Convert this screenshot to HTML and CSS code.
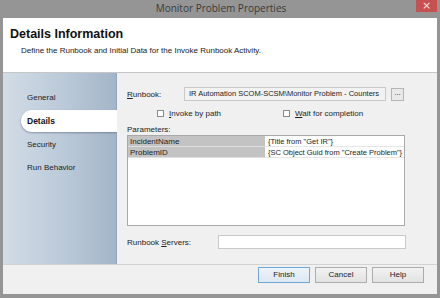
FILE: index.html
```html
<!DOCTYPE html>
<html>
<head>
<meta charset="utf-8">
<link rel="stylesheet" href="styles.css">
</head>
<body>
<div class="window">
  <div class="titlebar">
    <span class="title">Monitor Problem Properties</span>
    <div class="close">×</div>
  </div>
  <div class="dialog">
    <div class="header">
      <div class="h-title">Details Information</div>
      <div class="h-sub">Define the Runbook and Initial Data for the Invoke Runbook Activity.</div>
    </div>
    <div class="main">
      <div class="sidebar">
        <div class="nav">General</div>
        <div class="nav active">Details</div>
        <div class="nav">Security</div>
        <div class="nav">Run Behavior</div>
      </div>
      <div class="content">
        <div class="row-runbook">
          <span class="lbl lbl-runbook"><u>R</u>unbook:</span>
          <div class="textbox tb-runbook">IR Automation SCOM-SCSM\Monitor Problem - Counters</div>
          <div class="btn-dots">...</div>
        </div>
        <div class="row-checks">
          <label class="chk chk1"><span class="box"></span><span><u>I</u>nvoke by path</span></label>
          <label class="chk chk2"><span class="box"></span><span><u>W</u>ait for completion</span></label>
        </div>
        <div class="lbl lbl-params">Parameters:</div>
        <div class="grid">
          <div class="cell name">IncidentName</div>
          <div class="cell val">{Title from "Get IR"}</div>
          <div class="cell name">ProblemID</div>
          <div class="cell val">{SC Object Guid from "Create Problem"}</div>
        </div>
        <div class="row-servers">
          <span class="lbl lbl-servers">Runbook <u>S</u>ervers:</span>
          <div class="textbox tb-servers"></div>
        </div>
      </div>
    </div>
    <div class="footer">
      <div class="button default">Finish</div>
      <div class="button">Cancel</div>
      <div class="button">Help</div>
    </div>
  </div>
</div>
</body>
</html>
```
FILE: styles.css
```css
* { box-sizing: border-box; }
html, body { margin: 0; padding: 0; }
body {
  width: 440px;
  height: 298px;
  background: #8f8f8f;
  font-family: "Liberation Sans", Arial, sans-serif;
  color: #1e1e1e;
  font-size: 8px;
  overflow: hidden;
}
.window {
  width: 440px;
  height: 298px;
  display: flex;
  flex-direction: column;
  background: #959595;
}
.titlebar {
  height: 18px;
  position: relative;
  display: flex;
  align-items: center;
  justify-content: center;
}
.title {
  font-family: "Open Sans", "Liberation Sans", sans-serif;
  font-size: 10px;
  color: #3a3a3a;
  margin-top: -3px;
  margin-left: 2px;
}
.close {
  position: absolute;
  top: 0;
  right: 3px;
  width: 21px;
  height: 12px;
  background: #c75050;
  color: #f4e0e0;
  font-size: 11px;
  line-height: 11px;
  text-align: center;
  font-family: "DejaVu Sans", sans-serif;
}
.dialog {
  flex: 1;
  margin: 0 3px 4px 3px;
  background: #fff;
  display: flex;
  flex-direction: column;
}
.header {
  height: 55px;
  border-bottom: 1px solid #c6c6c6;
  padding: 8px 0 0 7px;
}
.h-title {
  font-size: 12.5px;
  font-weight: bold;
  color: #111;
  line-height: 16px;
}
.h-sub {
  margin: 2px 0 0 11px;
  font-size: 8px;
  line-height: 14px;
  color: #222;
}
.main {
  height: 191px;
  display: flex;
}
.sidebar {
  width: 114px;
  background: linear-gradient(to right, #d2dce6 0%, #bac9d8 55%, #a3b5c9 100%);
  border-right: 1px solid #94a6ba;
  padding-top: 13px;
}
.nav {
  height: 23px;
  line-height: 23px;
  padding-left: 24px;
  font-size: 8px;
  color: #222;
}
.nav.active {
  height: 22px;
  line-height: 22px;
  margin: 1px -1px 1px 18px;
  padding-left: 6px;
  background: #fff;
  border-radius: 11px 0 0 11px;
  font-weight: bold;
  font-size: 8.5px;
  color: #111;
  box-shadow: 0 1px 2px rgba(60, 70, 90, 0.45);
}
.content {
  flex: 1;
  background: #f0f0f0;
  padding: 14px 0 0 10px;
  display: flex;
  flex-direction: column;
}
.row-runbook {
  display: flex;
  align-items: center;
  height: 14px;
}
.lbl { font-size: 8px; color: #222; }
.lbl-runbook { width: 57px; }
.textbox {
  height: 14px;
  border: 1px solid #c9c9c9;
  background: #fafafa;
  font-size: 8px;
  line-height: 12px;
  padding-left: 4px;
  white-space: nowrap;
  overflow: hidden;
}
.tb-runbook { width: 202px; background: #f2f2f2; font-size: 7.5px; padding-left: 4px; }
.btn-dots {
  margin-left: 5px;
  width: 13px;
  height: 13px;
  border: 1px solid #b5b5b5;
  background: #e9e9e9;
  font-size: 8px;
  line-height: 7px;
  text-align: center;
  color: #333;
}
.row-checks {
  display: flex;
  height: 14px;
  margin-top: 5px;
  align-items: center;
}
.chk { display: flex; align-items: center; font-size: 8px; }
.chk .box {
  width: 7px;
  height: 7px;
  border: 1px solid #8a8a8a;
  background: #fff;
  margin-right: 5px;
}
.chk1 { margin-left: 30px; }
.chk2 { margin-left: 62px; }
.lbl-params { margin-top: 4px; line-height: 11px; }
.grid {
  margin-top: 0;
  width: 278px;
  height: 91px;
  border: 1px solid #a9a9a9;
  background: #fff;
  display: grid;
  grid-template-columns: 137px 1fr;
  grid-auto-rows: 11px;
  align-content: start;
}
.cell {
  font-size: 8px;
  line-height: 11px;
  padding-left: 2px;
  white-space: nowrap;
  overflow: hidden;
  border-bottom: 1px solid #e6e6e6;
}
.cell.name { background: #c3c3c3; border-bottom-color: #dedede; }
.cell.val { padding-left: 3px; font-size: 7.5px; }
.row-servers {
  margin-top: 9px;
  display: flex;
  align-items: center;
}
.lbl-servers { width: 91px; }
.tb-servers { width: 188px; height: 14px; background: #fff; }
.footer {
  flex: 1;
  border-top: 1px solid #d2d2d2;
  background: #f0f0f0;
  display: flex;
  justify-content: flex-end;
  align-items: flex-start;
  padding: 2px 13px 0 0;
  gap: 5px;
}
.button {
  width: 52px;
  height: 16px;
  border: 1px solid #adadad;
  background: linear-gradient(#f2f2f2, #e2e2e2);
  font-size: 8px;
  line-height: 14px;
  text-align: center;
  color: #222;
}
.button.default {
  border-color: #6fa7d6;
  background: linear-gradient(#eef4f9, #dde8f1);
}
```
